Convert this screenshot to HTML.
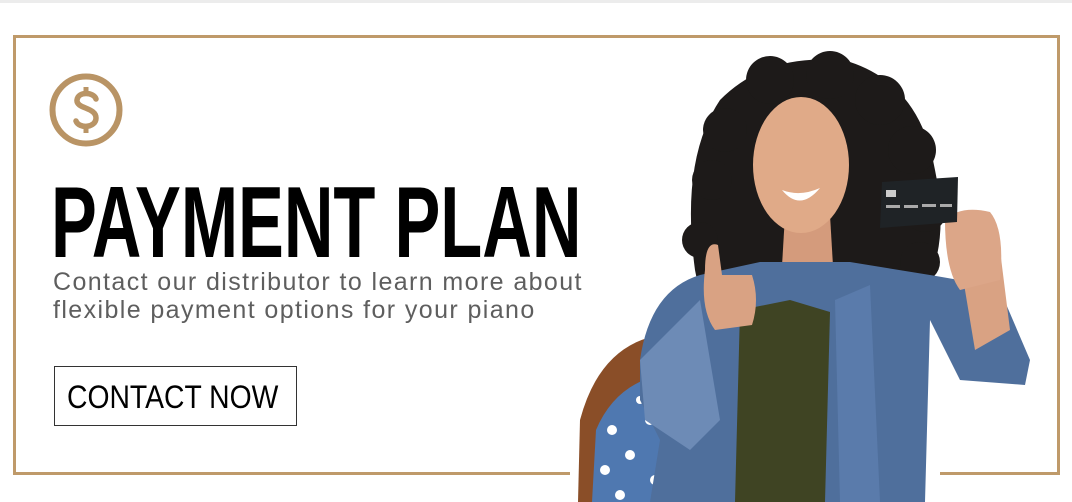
<!DOCTYPE html>
<html><head><style>
body{margin:0;width:1072px;height:502px;background:#fff;position:relative;overflow:hidden;font-family:"Liberation Sans",sans-serif}
.top{position:absolute;left:0;top:0;width:1072px;height:3px;background:#ececec}
.box{position:absolute;left:13px;top:35px;width:1041px;height:434px;border:3px solid #bf9a6a}
.t{position:absolute;white-space:nowrap;transform-origin:0 0}
</style></head><body>
<div class="top"></div>
<div class="box"></div>
<svg style="position:absolute;left:48px;top:72px" width="76" height="76" viewBox="0 0 76 76">
<circle cx="38" cy="38" r="33.5" fill="none" stroke="#b99465" stroke-width="6"/>
<path d="M48 27 C46 20 30 19 29 28 C28 37 48 35 48 46 C48 56 31 57 28 49" fill="none" stroke="#b99465" stroke-width="5.5" stroke-linecap="round"/>
<line x1="38" y1="15" x2="38" y2="21" stroke="#b99465" stroke-width="5"/>
<line x1="38" y1="54" x2="38" y2="61" stroke="#b99465" stroke-width="5"/>
</svg>
<div class="t" style="left:51px;top:166px;font-size:101px;font-weight:bold;color:#000;transform:scaleX(0.68)">PAYMENT PLAN</div>
<div class="t" style="left:53px;top:268px;font-size:25px;color:#5e5e5e;letter-spacing:1.4px;line-height:28px;transform:scaleX(1.0)">Contact our distributor to learn more about<br>flexible payment options for your piano</div>
<div style="position:absolute;left:54px;top:366px;width:241px;height:58px;border:1px solid #333"></div>
<div class="t" style="left:67px;top:379px;font-size:32px;color:#000;transform:scaleX(0.885)">CONTACT NOW</div>
<svg style="position:absolute;left:0;top:0" width="1072" height="502">
<rect x="570" y="466" width="370" height="10" fill="#fff"/>
<!-- backpack -->
<path d="M578 502 L580 420 Q600 345 660 335 L700 350 L700 502Z" fill="#8a4e28"/>
<path d="M592 502 L596 430 Q615 385 660 375 L700 390 L700 502Z" fill="#4f78b0"/>
<g fill="#fff"><circle cx="612" cy="430" r="5"/><circle cx="630" cy="455" r="5"/><circle cx="605" cy="470" r="5"/><circle cx="650" cy="420" r="5"/><circle cx="655" cy="480" r="5"/><circle cx="620" cy="495" r="5"/><circle cx="640" cy="400" r="4"/></g>
<!-- hair -->
<g fill="#1d1a19">
<path d="M695 270 Q680 160 720 100 Q770 50 850 62 Q920 85 935 170 Q950 240 925 290 L700 295Z"/>
<circle cx="700" cy="240" r="18"/><circle cx="712" cy="180" r="20"/><circle cx="725" cy="130" r="22"/>
<circle cx="770" cy="80" r="24"/><circle cx="830" cy="75" r="24"/><circle cx="880" cy="100" r="25"/>
<circle cx="912" cy="150" r="24"/><circle cx="925" cy="210" r="22"/><circle cx="920" cy="262" r="20"/>
</g>
<path d="M785 215 L830 215 L835 300 L780 300Z" fill="#d49b7c"/>
<ellipse cx="801" cy="165" rx="48" ry="68" fill="#e0aa88"/>
<path d="M782 190 Q800 212 820 188 Q800 197 782 190Z" fill="#fff"/>
<path d="M640 360 Q650 290 700 275 L760 262 L850 262 L930 275 Q990 285 1000 290 L1030 360 L1025 385 L960 380 L930 320 L925 502 L650 502 L660 440 L640 400Z" fill="#4f6f9c"/>
<path d="M640 360 L700 300 L720 420 L690 450 L645 420Z" fill="#6d8bb6"/>
<path d="M740 310 L790 300 L830 312 L825 502 L735 502Z" fill="#3f4423"/>
<path d="M835 300 L870 285 L880 502 L840 502Z" fill="#5a7bab"/>
<path d="M705 270 Q705 240 718 245 L722 275 L752 275 Q760 300 752 325 L715 330 Q700 310 705 270Z" fill="#d9a283"/>
<path d="M960 260 L1000 250 L1010 330 L975 350 Z" fill="#d9a283"/>
<path d="M945 220 Q960 205 990 212 Q1005 230 1000 280 L960 290 Q945 270 945 220Z" fill="#dca688"/>
<path d="M882 182 L958 177 L957 222 L880 228Z" fill="#1f2326"/>
<rect x="886" y="190" width="10" height="7" fill="#ccc"/>
<g fill="#aaa"><rect x="886" y="205" width="14" height="3"/><rect x="904" y="205" width="14" height="3"/><rect x="922" y="204" width="14" height="3"/><rect x="940" y="204" width="12" height="3"/></g>
</svg>
</body></html>
